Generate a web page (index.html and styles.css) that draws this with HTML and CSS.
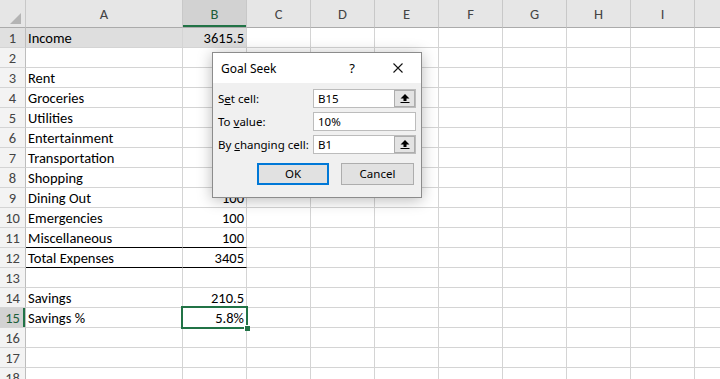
FILE: index.html
```html
<!DOCTYPE html>
<html lang="en">
<head>
    <meta charset="UTF-8">
    <title>Goal Seek</title>
    <link rel="stylesheet" href="styles.css">
</head>
<body>
  <table class="grid">
    <colgroup>
      <col class="w-hd"><col class="w-a"><col class="w-n"><col class="w-n"><col class="w-n"><col class="w-n"><col class="w-n"><col class="w-n"><col class="w-n"><col class="w-n"><col class="w-n">
    </colgroup>
    <thead>
      <tr>
        <th class="corner"><span class="tri"></span></th>
        <th>A</th><th class="selcol">B</th><th>C</th><th>D</th><th>E</th><th>F</th><th>G</th><th>H</th><th>I</th><th></th>
      </tr>
    </thead>
    <tbody>
      <tr class="shade"><th class="rh">1</th><td class="fill">Income</td><td class="fill num">3615.5</td><td></td><td></td><td></td><td></td><td></td><td></td><td></td><td></td></tr>
      <tr><th class="rh">2</th><td></td><td></td><td></td><td></td><td></td><td></td><td></td><td></td><td></td><td></td></tr>
      <tr><th class="rh">3</th><td>Rent</td><td class="num"></td><td></td><td></td><td></td><td></td><td></td><td></td><td></td><td></td></tr>
      <tr><th class="rh">4</th><td>Groceries</td><td class="num"></td><td></td><td></td><td></td><td></td><td></td><td></td><td></td><td></td></tr>
      <tr><th class="rh">5</th><td>Utilities</td><td class="num"></td><td></td><td></td><td></td><td></td><td></td><td></td><td></td><td></td></tr>
      <tr><th class="rh">6</th><td>Entertainment</td><td class="num"></td><td></td><td></td><td></td><td></td><td></td><td></td><td></td><td></td></tr>
      <tr><th class="rh">7</th><td>Transportation</td><td class="num"></td><td></td><td></td><td></td><td></td><td></td><td></td><td></td><td></td></tr>
      <tr><th class="rh">8</th><td>Shopping</td><td class="num"></td><td></td><td></td><td></td><td></td><td></td><td></td><td></td><td></td></tr>
      <tr><th class="rh">9</th><td>Dining Out</td><td class="num">100</td><td></td><td></td><td></td><td></td><td></td><td></td><td></td><td></td></tr>
      <tr><th class="rh">10</th><td>Emergencies</td><td class="num">100</td><td></td><td></td><td></td><td></td><td></td><td></td><td></td><td></td></tr>
      <tr><th class="rh">11</th><td class="line">Miscellaneous</td><td class="num line">100</td><td></td><td></td><td></td><td></td><td></td><td></td><td></td><td></td></tr>
      <tr><th class="rh">12</th><td class="line">Total Expenses</td><td class="num line">3405</td><td></td><td></td><td></td><td></td><td></td><td></td><td></td><td></td></tr>
      <tr><th class="rh">13</th><td></td><td></td><td></td><td></td><td></td><td></td><td></td><td></td><td></td><td></td></tr>
      <tr><th class="rh">14</th><td>Savings</td><td class="num">210.5</td><td></td><td></td><td></td><td></td><td></td><td></td><td></td><td></td></tr>
      <tr><th class="rh selrow">15</th><td>Savings %</td><td class="num active">5.8%</td><td></td><td></td><td></td><td></td><td></td><td></td><td></td><td></td></tr>
      <tr><th class="rh">16</th><td></td><td></td><td></td><td></td><td></td><td></td><td></td><td></td><td></td><td></td></tr>
      <tr><th class="rh">17</th><td></td><td></td><td></td><td></td><td></td><td></td><td></td><td></td><td></td><td></td></tr>
      <tr><th class="rh">18</th><td></td><td></td><td></td><td></td><td></td><td></td><td></td><td></td><td></td><td></td></tr>
    </tbody>
  </table>

  <div class="dlg">
    <div class="dlg-title">
      <span class="dlg-name">Goal Seek</span>
      <span class="dlg-help">?</span>
      <span class="dlg-close">
        <svg width="10" height="10" viewBox="0 0 10 10"><path d="M0.5 0.5L9.5 9.5M9.5 0.5L0.5 9.5" stroke="#111" stroke-width="1.1" fill="none"/></svg>
      </span>
    </div>
    <div class="dlg-body">
      <div class="field">
        <label>S<u>e</u>t cell:</label>
        <div class="ref"><span class="ref-val">B15</span><span class="ref-btn"><svg width="10" height="9" viewBox="0 0 10 9"><path d="M5 0L9.5 4.5H6.5V7H3.5V4.5H0.5Z" fill="#000"/><rect x="0.5" y="8" width="9" height="1" fill="#000"/></svg></span></div>
      </div>
      <div class="field">
        <label>To <u>v</u>alue:</label>
        <div class="ref"><span class="ref-val">10%</span></div>
      </div>
      <div class="field">
        <label>By <u>c</u>hanging cell:</label>
        <div class="ref"><span class="ref-val">B1</span><span class="ref-btn"><svg width="10" height="9" viewBox="0 0 10 9"><path d="M5 0L9.5 4.5H6.5V7H3.5V4.5H0.5Z" fill="#000"/><rect x="0.5" y="8" width="9" height="1" fill="#000"/></svg></span></div>
      </div>
      <div class="btns">
        <div class="btn btn-ok">OK</div>
        <div class="btn">Cancel</div>
      </div>
    </div>
  </div>
</body>
</html>
```
FILE: styles.css
```css
html,body{margin:0;padding:0;}
body{
  width:720px;
  height:379px;
  overflow:hidden;
  position:relative;
  background:#fff;
  font-family: Carlito, Lato, "Liberation Sans", sans-serif;
}
.grid{
  border-collapse:separate;
  border-spacing:0;
  table-layout:fixed;
  width:759px;
  font-size:14.5px;
  color:#000;
}
.w-hd{width:26px;}
.w-a{width:157px;}
.w-n{width:64px;}
.grid td,.grid th{
  padding:0;
  height:20px;
  box-sizing:border-box;
  border-right:1px solid #d4d4d4;
  border-bottom:1px solid #d4d4d4;
  line-height:18px;
  white-space:nowrap;
  overflow:hidden;
  font-weight:normal;
}
.grid td{padding-left:2px;}
.grid td.num{text-align:right;padding:0 2px 0 0;}
.grid thead th{
  height:28px;
  background:#e6e6e6;
  color:#444;
  border-right-color:#c8c8c8;
  border-bottom-color:#ababab;
  text-align:center;
  line-height:26px;
}
.grid thead th.selcol{
  background:#d2d2d2;
  color:#1e5e3a;
  box-shadow:inset 0 -2px 0 #217346;
}
.corner{position:relative;}
.tri{
  position:absolute;
  right:4px;
  bottom:3px;
  width:0;
  height:0;
  border-left:11px solid transparent;
  border-bottom:11px solid #b4b4b4;
}
.grid th.rh{
  background:#f3f3f3;
  color:#444;
  text-align:center;
  border-right-color:#bdbdbd;
}
.grid tr.shade th.rh{background:#e0e0e0;}
.grid th.selrow{
  background:#d2d2d2;
  color:#1e5e3a;
  box-shadow:inset -2px 0 0 #217346;
}
.grid td.fill{background:#dedede;}
.grid td.line{border-bottom-color:#000;}
.grid td.active{position:relative;overflow:visible;}
.grid td.active::before{
  content:"";
  position:absolute;
  left:-2px;
  top:-2px;
  right:-2px;
  bottom:-2px;
  border:2px solid #217346;
}
.grid td.active::after{
  content:"";
  position:absolute;
  right:-4px;
  bottom:-4px;
  width:5px;
  height:5px;
  background:#217346;
  border-left:1px solid #fff;
  border-top:1px solid #fff;
}

/* goal seek dialog */
.dlg{
  position:absolute;
  left:212px;
  top:52px;
  width:210px;
  height:146px;
  box-sizing:border-box;
  border:1px solid #8c8c8c;
  background:#f0f0f0;
  box-shadow:0 2px 14px rgba(0,0,0,0.28);
  font-family:"Noto Sans", "Open Sans", sans-serif;
  font-size:11.5px;
  color:#000;
}
.dlg-title{
  height:30px;
  background:#fff;
  display:flex;
  align-items:center;
}
.dlg-name{
  flex:1;
  padding-left:8px;
  font-size:12px;
}
.dlg-help,.dlg-close{
  width:46px;
  text-align:center;
  display:flex;
  justify-content:center;
  align-items:center;
  font-size:13px;
}
.dlg-body{
  padding:6px 5px 0 5px;
}
.field{
  display:grid;
  grid-template-columns:95px 1fr;
  align-items:center;
  margin-bottom:4px;
}
.field label{white-space:nowrap;}
.ref{
  height:19px;
  box-sizing:border-box;
  border:1px solid #bcbcbc;
  background:#fff;
  display:flex;
  align-items:center;
}
.ref-val{flex:1;padding-left:4px;}
.ref-btn{
  width:21px;
  height:17px;
  box-sizing:border-box;
  border:1px solid #adadad;
  background:#e3e3e3;
  display:flex;
  justify-content:center;
  align-items:center;
}
.btns{
  display:flex;
  justify-content:flex-end;
  gap:12px;
  margin-top:9px;
  padding-right:2px;
}
.btn{
  width:73px;
  height:22px;
  box-sizing:border-box;
  border:1px solid #adadad;
  background:#e1e1e1;
  text-align:center;
  line-height:20px;
}
.btn-ok{
  width:72px;
  border:2px solid #0078d7;
  line-height:18px;
}
```
